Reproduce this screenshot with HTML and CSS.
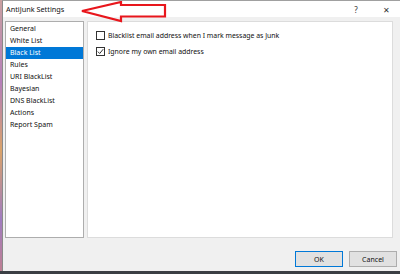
FILE: index.html
```html
<!DOCTYPE html>
<html lang="en">
<head>
    <meta charset="UTF-8">
    <title>AntiJunk Settings</title>
    <link rel="stylesheet" href="styles.css">
</head>
<body>
    <div class="desktop">
        <div class="window">
            <div class="titlebar">
                <span class="title">AntiJunk Settings</span>
                <span class="title-btn help">?</span>
                <span class="title-btn close">&#x2715;</span>
                <svg class="arrow" width="90" height="22" viewBox="0 0 90 22">
                    <polygon points="2,10 41,1 41,4 85,4 85,15.5 41,15.5 41,20" fill="none" stroke="#e8161c" stroke-width="2.2" stroke-linejoin="miter"/>
                </svg>
            </div>
            <div class="body">
                <div class="panes">
                    <ul class="nav">
                        <li>General</li>
                        <li>White List</li>
                        <li class="selected">Black List</li>
                        <li>Rules</li>
                        <li>URI BlackList</li>
                        <li>Bayesian</li>
                        <li>DNS BlackList</li>
                        <li>Actions</li>
                        <li>Report Spam</li>
                    </ul>
                    <div class="page">
                        <label class="check">
                            <span class="box"></span>
                            Blacklist email address when I mark message as Junk
                        </label>
                        <label class="check">
                            <span class="box checked">
                                <svg width="7" height="7" viewBox="0 0 7 7"><path d="M0.8 3.6 L2.7 5.5 L6.2 1.2" fill="none" stroke="#333" stroke-width="1"/></svg>
                            </span>
                            Ignore my own email address
                        </label>
                    </div>
                </div>
                <div class="buttons">
                    <button class="btn default">OK</button>
                    <button class="btn">Cancel</button>
                </div>
            </div>
        </div>
        <div class="taskbar"></div>
    </div>
</body>
</html>
```
FILE: styles.css
```css
body {
    margin: 0;
    background: #2f3236;
    font-family: "Noto Sans", sans-serif;
}
.desktop {
    width: 400px;
    height: 274px;
    background: linear-gradient(180deg, #c9a0a0 0%, #b57fb9 30%, #d9a36a 55%, #a07cc0 80%, #c08090 100%);
    position: relative;
}
.window {
    margin-left: 2px;
    width: 397px;
    height: 270px;
    border-top: 1px solid #a0a0a0;
    border-left: 1px solid #8a8a8a;
    background: #f0f0f0;
    display: flex;
    flex-direction: column;
}
.taskbar {
    height: 3px;
    background: #3b3f44;
}
.titlebar {
    height: 16px;
    background: #ffffff;
    display: flex;
    align-items: center;
    position: relative;
    font-size: 7.3px;
    color: #111;
}
.title {
    padding-left: 3px;
    flex: 1;
}
.title-btn {
    color: #333;
    font-size: 8px;
    width: 30px;
    text-align: center;
}
.close {
    margin-right: -1px;
}
.arrow {
    position: absolute;
    left: 77px;
    top: 0;
}
.body {
    flex: 1;
    display: flex;
    flex-direction: column;
    padding: 4px 1px 0 2px;
}
.panes {
    display: flex;
    gap: 3px;
}
.nav {
    list-style: none;
    margin: 0;
    padding: 1px 0 0;
    width: 77px;
    height: 214px;
    background: #fff;
    border: 1px solid #adadad;
    font-size: 7px;
    color: #111;
}
.nav li {
    height: 12px;
    line-height: 12px;
    padding-left: 4px;
    white-space: nowrap;
}
.nav li.selected {
    background: #0078d7;
    color: #fff;
}
.page {
    width: 306px;
    height: 217px;
    background: #fff;
    border: 1px solid #dcdcdc;
    padding: 9px 0 0 8px;
    box-sizing: border-box;
    display: flex;
    flex-direction: column;
    gap: 7px;
    font-size: 6.9px;
    color: #111;
}
.check {
    display: flex;
    align-items: center;
    gap: 3px;
    height: 9px;
}
.box {
    width: 7px;
    height: 7px;
    border: 1px solid #333;
    background: #fff;
    display: flex;
    align-items: center;
    justify-content: center;
}
.box svg {
    display: block;
}
.buttons {
    display: flex;
    justify-content: flex-end;
    gap: 6px;
    padding: 13px 2px 0 0;
}
.btn {
    width: 48px;
    height: 16px;
    font-family: "Noto Sans", sans-serif;
    font-size: 7px;
    background: #e1e1e1;
    border: 1px solid #adadad;
    padding: 0;
    color: #111;
}
.btn.default {
    border-color: #0078d7;
}
```
